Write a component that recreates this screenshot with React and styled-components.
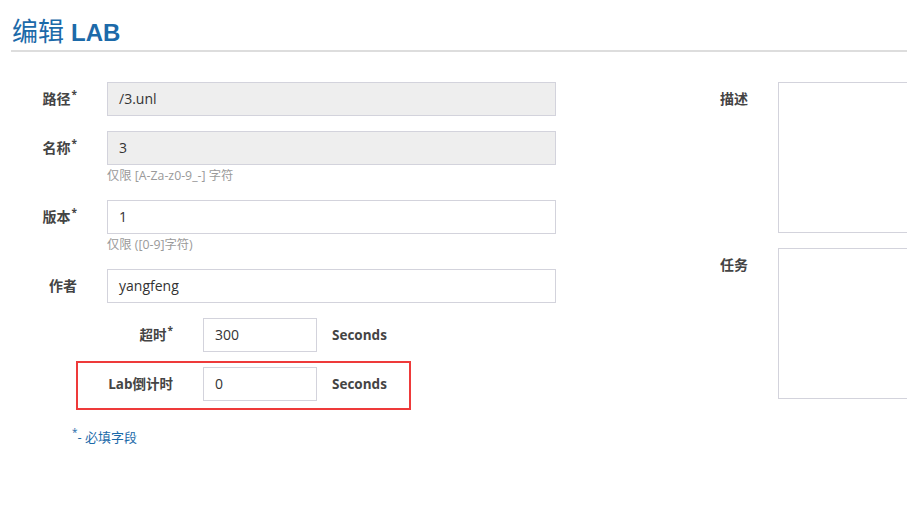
import React from "react";
import styled, { createGlobalStyle } from "styled-components";

const Global = createGlobalStyle`
  html, body { margin: 0; padding: 0; background: #fff; overflow: hidden; }
  body { font-family: "Open Sans", "Noto Sans", "Noto Sans CJK SC", sans-serif; color: #333; }
  * { box-sizing: border-box; }
`;

const Page = styled.div`
  width: 907px;
  height: 505px;
  overflow: hidden;
`;

const Header = styled.h1`
  margin: 0 0 0 11px;
  padding: 12px 0 0 1px;
  height: 52px;
  border-bottom: 2px solid #dddddd;
  font-weight: normal;
  color: #1c6aa9;
  line-height: 34px;
  white-space: nowrap;
`;

const HeaderCjk = styled.span`
  font-family: "Noto Sans CJK SC", sans-serif;
  font-size: 26px;
  font-weight: 400;
`;

const HeaderLatin = styled.span`
  font-family: "Liberation Sans", Arial, sans-serif;
  font-size: 24px;
  font-weight: 700;
  margin-left: 7px;
`;

const Columns = styled.div`
  display: flex;
  gap: 104px;
  margin-top: 30px;
  width: 1200px;
`;

const LeftCol = styled.div`
  width: 556px;
  flex: none;
  display: flex;
  flex-direction: column;
`;

const RightCol = styled.div`
  display: flex;
  flex-direction: column;
  gap: 15px;
`;

const Row = styled.div`
  display: grid;
  grid-template-columns: ${(p) => p.$labelWidth || 77}px 1fr;
  column-gap: 30px;
  align-items: start;
  margin-bottom: ${(p) => (p.$tight ? 0 : 15)}px;
`;

const Label = styled.label`
  text-align: right;
  font-size: 14px;
  font-weight: 700;
  color: #444;
  padding-top: 8px;
  line-height: 18px;
  white-space: nowrap;
  font-family: "Open Sans", "Noto Sans CJK SC", sans-serif;
`;

const Star = styled.span`
  position: relative;
  top: -6px;
  font-size: 10px;
  line-height: 0;
  margin-left: 1px;
`;

const Input = styled.div`
  height: 34px;
  width: ${(p) => p.$width || 449}px;
  border: 1px solid #d3d3dc;
  background: ${(p) => (p.$disabled ? "#eeeeee" : "#fff")};
  padding: 0 11px;
  font-size: 14px;
  line-height: 32px;
  color: #333;
  font-family: "Open Sans", "Noto Sans CJK SC", sans-serif;
`;

const Help = styled.div`
  font-size: 12.3px;
  color: #9a9a9a;
  line-height: 18px;
  margin-top: 2px;
  white-space: nowrap;
  font-family: "Open Sans", "Noto Sans CJK SC", sans-serif;
`;

const Field = styled.div`
  display: flex;
  flex-direction: column;
`;

const TimeRow = styled.div`
  margin-left: 76px;
  width: 335px;
  display: flex;
  align-items: center;
  border: 2px solid ${(p) => (p.$highlight ? "#ee3a3a" : "transparent")};
  padding: 4px 0 7px;
  margin-top: ${(p) => (p.$first ? -6 : 0)}px;
`;

const TimeLabel = styled.label`
  width: 95px;
  flex: none;
  text-align: right;
  font-size: 13.5px;
  font-weight: 700;
  color: #444;
  line-height: 18px;
  white-space: nowrap;
  font-family: "Open Sans", "Noto Sans CJK SC", sans-serif;
`;

const TimeInput = styled(Input)`
  margin-left: 30px;
  flex: none;
`;

const Unit = styled.span`
  margin-left: 15px;
  font-size: 13.5px;
  font-weight: 700;
  color: #444;
  font-family: "Open Sans", sans-serif;
`;

const Required = styled.div`
  margin: 18px 0 0 71px;
  font-size: 13px;
  line-height: 18px;
  color: #1c6aa9;
  font-family: "Open Sans", "Noto Sans CJK SC", sans-serif;
`;

const TextArea = styled.div`
  width: 300px;
  height: 151px;
  border: 1px solid #d3d3dc;
  background: #fff;
`;

const RLabel = styled(Label)`
  padding-top: 8px;
`;

export default function App() {
  return (
    <Page>
      <Global />
      <Header>
        <HeaderCjk>编辑</HeaderCjk>
        <HeaderLatin>LAB</HeaderLatin>
      </Header>
      <Columns>
        <LeftCol>
          <Row>
            <Label>路径<Star>*</Star></Label>
            <Input $disabled>/3.unl</Input>
          </Row>
          <Row>
            <Label>名称<Star>*</Star></Label>
            <Field>
              <Input $disabled>3</Input>
              <Help>仅限 [A-Za-z0-9_-] 字符</Help>
            </Field>
          </Row>
          <Row>
            <Label>版本<Star>*</Star></Label>
            <Field>
              <Input>1</Input>
              <Help>仅限 ([0-9]字符)</Help>
            </Field>
          </Row>
          <Row>
            <Label>作者</Label>
            <Input>yangfeng</Input>
          </Row>
          <TimeRow $first>
            <TimeLabel>超时<Star>*</Star></TimeLabel>
            <TimeInput $width={114}>300</TimeInput>
            <Unit>Seconds</Unit>
          </TimeRow>
          <TimeRow $highlight>
            <TimeLabel>Lab倒计时</TimeLabel>
            <TimeInput $width={114}>0</TimeInput>
            <Unit>Seconds</Unit>
          </TimeRow>
          <Required><Star>*</Star>- 必填字段</Required>
        </LeftCol>
        <RightCol>
          <Row $labelWidth={88} $tight>
            <RLabel>描述</RLabel>
            <TextArea />
          </Row>
          <Row $labelWidth={88} $tight>
            <RLabel>任务</RLabel>
            <TextArea />
          </Row>
        </RightCol>
      </Columns>
    </Page>
  );
}
